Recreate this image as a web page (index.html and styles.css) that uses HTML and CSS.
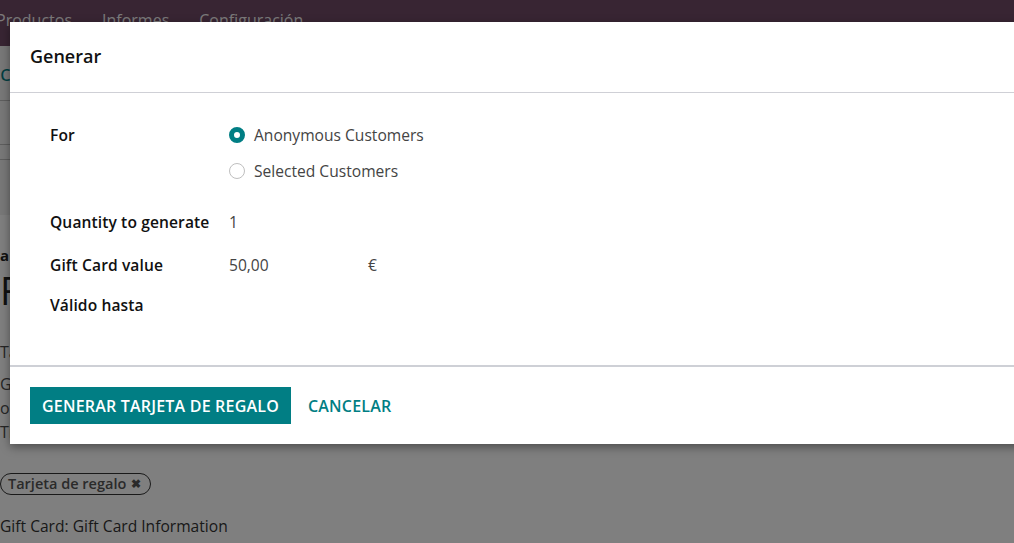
FILE: index.html
```html
<!DOCTYPE html>
<html lang="es">
<head>
<meta charset="utf-8">
<title>Generar</title>
<link rel="stylesheet" href="styles.css">
</head>
<body>
<div class="page">
  <nav class="navbar">
    <span class="nav-item">Productos</span>
    <span class="nav-item">Informes</span>
    <span class="nav-item">Configuración</span>
  </nav>
  <div class="control-panel">
    <div class="breadcrumb">ct</div>
  </div>
  <div class="buttons-bar"></div>
  <div class="status-bar"></div>
  <div class="form-bg"></div>
  <div class="sheet">
    <div class="sheet-label">a</div>
    <div class="sheet-title">Fija</div>
    <div class="sheet-sub">Tarjeta</div>
    <div class="sheet-line">Gift Card</div>
    <div class="sheet-line">or</div>
    <div class="sheet-line">Tipo</div>
    <div class="tag-row"><span class="tag">Tarjeta de regalo <span class="tag-x">&#10006;</span></span></div>
    <div class="info">Gift Card: Gift Card Information</div>
  </div>
</div>
<div class="backdrop"></div>
<div class="modal">
  <header class="modal-header">
    <h4 class="modal-title">Generar</h4>
  </header>
  <main class="modal-body">
    <div class="field field-for">
      <div class="label">For</div>
      <div class="value radios">
        <label class="radio"><span class="radio-dot checked"></span>Anonymous Customers</label>
        <label class="radio"><span class="radio-dot"></span>Selected Customers</label>
      </div>
    </div>
    <div class="field field-qty">
      <div class="label">Quantity to generate</div>
      <div class="value">1</div>
    </div>
    <div class="field field-val">
      <div class="label">Gift Card value</div>
      <div class="value money"><span class="amount">50,00</span><span class="currency">€</span></div>
    </div>
    <div class="field field-date">
      <div class="label">Válido hasta</div>
      <div class="value"></div>
    </div>
  </main>
  <footer class="modal-footer">
    <button class="btn btn-primary">GENERAR TARJETA DE REGALO</button>
    <button class="btn btn-link">CANCELAR</button>
  </footer>
</div>
</body>
</html>
```
FILE: styles.css
```css
html, body {
  margin: 0;
  padding: 0;
  width: 1014px;
  height: 543px;
  overflow: hidden;
  font-family: "Open Sans", "Noto Sans", sans-serif;
}
body { position: relative; background: #fff; }

.page { width: 1014px; height: 543px; overflow: hidden; color: #4c4c4c; }

.navbar {
  height: 46px;
  background: #714b67;
  display: flex;
  align-items: center;
  margin-left: -4px;
}
.nav-item {
  color: rgba(255,255,255,0.95);
  font-size: 16px;
  margin-right: 30px;
  position: relative;
  top: -3px;
}

.control-panel {
  height: 55px;
  box-sizing: border-box;
  background: #f0f0f0;
  border-bottom: 1px solid #bdbdbd;
  display: flex;
  align-items: center;
}
.breadcrumb { color: #017e84; font-size: 22px; position: relative; top: -1px; }
.buttons-bar { height: 44px; box-sizing: border-box; background: #f0f0f0; border-bottom: 1px solid #bdbdbd; }
.status-bar { height: 15px; box-sizing: border-box; background: #f0f0f0; border-bottom: 1px solid #bdbdbd; }
.form-bg { height: 55px; background: #f0f0f0; }

.sheet { padding-top: 29px; }
.sheet-label { font-weight: 700; font-size: 15px; color: #222; height: 22px; line-height: 22px; }
.sheet-title { font-size: 38px; color: #222; height: 44px; line-height: 44px; margin-top: 2px; }
.sheet-sub { font-size: 16px; line-height: 24px; margin-top: 28px; }
.sheet-line { font-size: 16px; line-height: 24px; }
.sheet-sub + .sheet-line { margin-top: 8px; }

.tag-row { margin-top: 28px; height: 22px; }
.tag {
  display: inline-flex;
  align-items: center;
  box-sizing: border-box;
  height: 22px;
  border: 1px solid #333;
  border-radius: 11px;
  padding: 0 9px 0 7px;
  font-size: 14.5px;
  font-weight: 600;
  color: #555;
}
.tag-x { font-size: 12px; margin-left: 5px; }
.info { margin-top: 20px; font-size: 15.6px; line-height: 24px; color: #333; }

.backdrop {
  position: absolute;
  inset: 0;
  background: rgba(0,0,0,0.5);
}

.modal {
  position: absolute;
  left: 10px;
  top: 22px;
  width: 1100px;
  background: #fff;
  box-shadow: 0 3px 9px rgba(0,0,0,0.4);
  color: #212529;
}
.modal-header {
  height: 71px;
  border-bottom: 1px solid #cfd0d6;
  display: flex;
  align-items: center;
  padding-left: 20px;
  box-sizing: border-box;
}
.modal-title {
  margin: 0;
  font-size: 18px;
  font-weight: 600;
  color: #111;
  position: relative;
  top: -1px;
}

.modal-body {
  display: block;
  padding: 30px 40px 48px;
  height: 272px;
  box-sizing: border-box;
}
.field {
  display: grid;
  grid-template-columns: 179px 1fr;
  align-items: start;
  line-height: 24px;
  font-size: 15.6px;
}
.label { font-weight: 600; color: #111; letter-spacing: 0.1px; }
.value { color: #444; }
.field-qty { margin-top: 27px; }
.field-val { margin-top: 19px; }
.field-date { margin-top: 16px; }

.radios { display: flex; flex-direction: column; gap: 12px; }
.radio { display: flex; align-items: center; color: #444; }
.radio-dot {
  width: 16px;
  height: 16px;
  box-sizing: border-box;
  border-radius: 50%;
  border: 1px solid #bfbfbf;
  margin-right: 9px;
  background: #fff;
}
.radio-dot.checked {
  border: 5px solid #017e84;
  background: #fff;
}

.money { display: flex; }
.amount { width: 139px; }

.modal-footer {
  border-top: 2px solid #ced0d6;
  padding: 20px 20px;
  display: flex;
  align-items: center;
}
.btn {
  font-family: inherit;
  font-size: 16px;
  letter-spacing: 0.2px;
  font-weight: 600;
  border: 0;
  height: 37px;
  padding: 0 12px;
  cursor: pointer;
}
.btn-primary { background: #017e84; color: #fff; }
.btn-link { background: transparent; color: #017e84; margin-left: 5px; }
```
